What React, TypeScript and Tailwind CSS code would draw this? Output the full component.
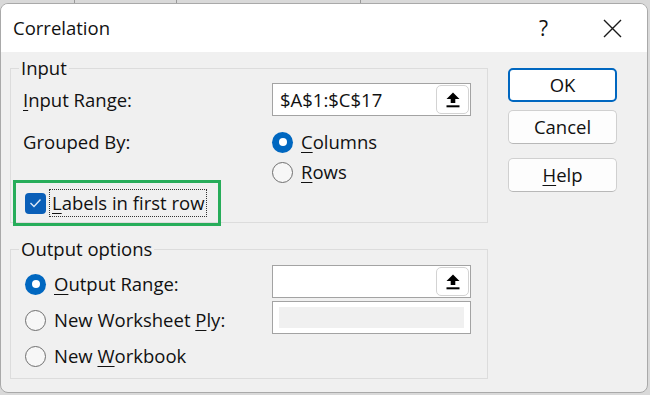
import React from "react";

const font = { fontFamily: '"Open Sans", "Noto Sans", sans-serif' };

function Radio({ checked }: { checked?: boolean }) {
  return checked ? (
    <span className="flex h-[21px] w-[21px] shrink-0 items-center justify-center rounded-full bg-[#0067c0]">
      <span className="h-[8px] w-[8px] rounded-full bg-white" />
    </span>
  ) : (
    <span className="h-[21px] w-[21px] shrink-0 rounded-full border-[1.5px] border-[#6f6f6f] bg-[#f7f7f7]" />
  );
}

function UploadIcon() {
  return (
    <svg width="14" height="16" viewBox="0 0 14 16">
      <path d="M7 0.5 L13.5 7 H9.3 V11 H4.7 V7 H0.5 Z" fill="#000" />
      <rect x="0.5" y="13.3" width="13" height="2" fill="#000" />
    </svg>
  );
}

function RefInput({ value }: { value?: string }) {
  return (
    <div className="flex h-[33px] w-[199px] items-center border border-[#a3a3a3] bg-white pl-[7px]">
      <span className="flex-1 text-[18.5px] text-[#111]">{value}</span>
      <span className="mr-[1px] flex h-[29px] w-[33px] items-center justify-center rounded-[5px] border border-[#d3d3d3] bg-white">
        <UploadIcon />
      </span>
    </div>
  );
}

export default function App() {
  return (
    <div className="relative h-[395px] w-[650px] overflow-hidden bg-[#d9d9d9] pt-[3px]" style={font}>
      <div className="absolute left-[74px] top-0 h-[3px] w-px bg-[#9a9a9a]" />
      <div className="absolute left-[176px] top-0 h-[3px] w-px bg-[#9a9a9a]" />
      <div className="absolute left-[360px] top-0 h-[3px] w-px bg-[#9a9a9a]" />
      <div className="flex h-[390px] w-[648px] flex-col overflow-hidden rounded-[8px] border border-[#a9a9a9] bg-[#f0f0f0] text-[#111]">
        {/* Title bar */}
        <div className="flex h-[48px] shrink-0 items-center bg-white pl-[12px]">
          <span className="text-[18.5px]">Correlation</span>
          <span className="ml-auto mr-[55px] text-[21px] leading-none">?</span>
          <svg className="mr-[25px]" width="19" height="19" viewBox="0 0 19 19">
            <path d="M1 1 L18 18 M18 1 L1 18" stroke="#1a1a1a" strokeWidth="1.4" />
          </svg>
        </div>

        {/* Body */}
        <div className="flex flex-1 text-[18.5px]">
          <div className="pl-[9px] pt-[16px]">
            {/* Input group */}
            <div className="relative h-[155px] w-[478px] border border-[#dcdcdc]">
              <span className="absolute -top-[14px] left-[8px] bg-[#f0f0f0] px-[2px] leading-[26px]">Input</span>
              <div className="flex pl-[12px] pt-[14px]">
                <div className="flex w-[249px] flex-col">
                  <div className="flex h-[33px] items-center">
                    <span><u className="underline-offset-[3px]">I</u>nput Range:</span>
                  </div>
                  <div className="mt-[11px] flex h-[30px] items-center">Grouped By:</div>
                  <div className="-ml-[10px] mt-[23px] flex h-[46px] w-[208px] items-center border-[3px] border-solid border-[#27ad5a] pl-[9px]">
                    <span className="flex h-[21px] w-[21px] shrink-0 items-center justify-center rounded-[4px] bg-[#0a5fb8]">
                      <svg width="13" height="10" viewBox="0 0 13 10">
                        <path d="M1.5 5 L5 8.5 L11.5 1.5" stroke="#dce8f7" strokeWidth="1.4" fill="none" />
                      </svg>
                    </span>
                    <span className="ml-[3px] border border-dotted border-[#333] px-[2px] leading-[26px]">
                      <u className="underline-offset-[3px]">L</u>abels in first row
                    </span>
                  </div>
                </div>
                <div className="flex flex-col">
                  <RefInput value="$A$1:$C$17" />
                  <div className="mt-[11px] flex h-[30px] items-center">
                    <Radio checked />
                    <span className="ml-[8px]"><u className="underline-offset-[3px]">C</u>olumns</span>
                  </div>
                  <div className="flex h-[30px] items-center">
                    <Radio />
                    <span className="ml-[8px]"><u className="underline-offset-[3px]">R</u>ows</span>
                  </div>
                </div>
              </div>
            </div>

            {/* Output group */}
            <div className="relative mt-[26px] h-[130px] w-[478px] border border-[#dcdcdc]">
              <span className="absolute -top-[14px] left-[8px] bg-[#f0f0f0] px-[2px] leading-[26px]">Output options</span>
              <div className="flex pl-[14px]">
                <div className="flex w-[247px] flex-col pt-[16px]">
                  <div className="flex h-[36px] items-center">
                    <Radio checked />
                    <span className="ml-[8px]"><u className="underline-offset-[3px]">O</u>utput Range:</span>
                  </div>
                  <div className="flex h-[36px] items-center">
                    <Radio />
                    <span className="ml-[8px]">New Worksheet <u className="underline-offset-[3px]">P</u>ly:</span>
                  </div>
                  <div className="flex h-[36px] items-center">
                    <Radio />
                    <span className="ml-[8px]">New <u className="underline-offset-[3px]">W</u>orkbook</span>
                  </div>
                </div>
                <div className="flex flex-col pt-[15px]">
                  <RefInput />
                  <div className="mt-[3px] flex h-[33px] w-[199px] items-center justify-center border border-[#a3a3a3] bg-white">
                    <div className="h-[21px] w-[185px] bg-[#f0f0f0]" />
                  </div>
                </div>
              </div>
            </div>
          </div>

          {/* Buttons */}
          <div className="ml-[20px] flex flex-col pt-[16px]">
            <button className="flex h-[34px] w-[109px] items-center justify-center rounded-[5px] border-2 border-[#0067c0] bg-white">
              OK
            </button>
            <button className="mt-[8px] flex h-[34px] w-[109px] items-center justify-center rounded-[5px] border border-[#d0d0d0] border-b-[#b8b8b8] bg-[#fdfdfd]">
              Cancel
            </button>
            <button className="mt-[14px] flex h-[34px] w-[109px] items-center justify-center rounded-[5px] border border-[#d0d0d0] border-b-[#b8b8b8] bg-[#fdfdfd]">
              <span><u className="underline-offset-[3px]">H</u>elp</span>
            </button>
          </div>
        </div>
      </div>
    </div>
  );
}
